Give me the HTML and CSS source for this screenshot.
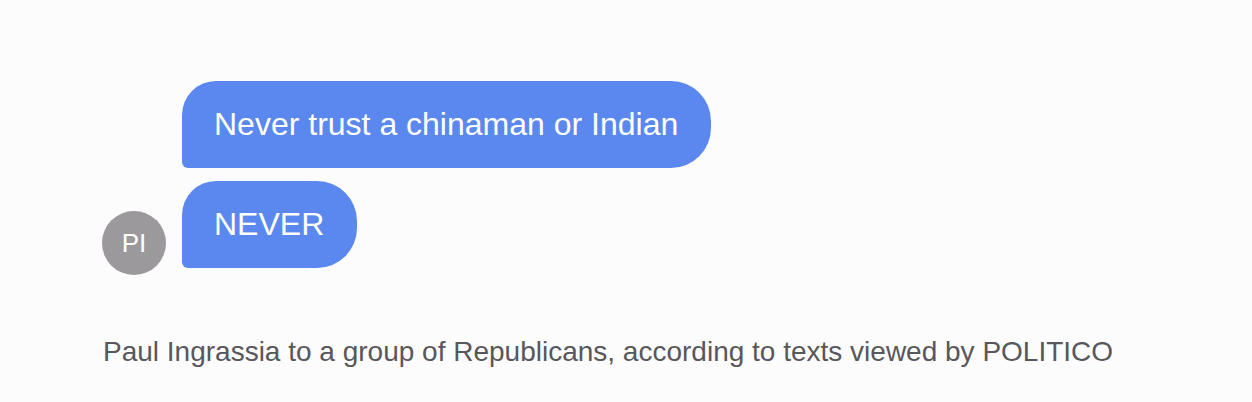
FILE: index.html
```html
<!DOCTYPE html>
<html lang="en">
<head>
<meta charset="utf-8">
<title>Messages</title>
<link rel="stylesheet" href="styles.css">
</head>
<body>
<main class="page">
  <div class="thread">
    <div class="avatar">PI</div>
    <div class="bubbles">
      <div class="bubble">Never trust a chinaman or Indian</div>
      <div class="bubble">NEVER</div>
    </div>
  </div>
  <p class="caption">Paul Ingrassia to a group of Republicans, according to texts viewed by POLITICO</p>
</main>
</body>
</html>
```

FILE: styles.css
```css
html, body {
  margin: 0;
  padding: 0;
  background: #fdfcfd;
}
body {
  font-family: "Liberation Sans", Arial, Helvetica, sans-serif;
}
.page {
  padding: 81px 0 0 102px;
}
.thread {
  display: flex;
  align-items: flex-end;
  gap: 16px;
}
.avatar {
  width: 64px;
  height: 64px;
  border-radius: 50%;
  background: #9b999c;
  color: #fff;
  font-size: 26px;
  display: flex;
  align-items: center;
  justify-content: center;
  margin-bottom: -7px;
  flex: none;
}
.bubbles {
  display: flex;
  flex-direction: column;
  align-items: flex-start;
  gap: 13px;
}
.bubble {
  background: #5b88ee;
  color: #fff;
  font-size: 32px;
  line-height: 37px;
  padding: 25px 33px 25px 32px;
  border-radius: 34px 40px 40px 6px;
}
.caption {
  margin: 68px 0 0 1px;
  font-size: 28px;
  line-height: 32px;
  color: #58575b;
}
```
